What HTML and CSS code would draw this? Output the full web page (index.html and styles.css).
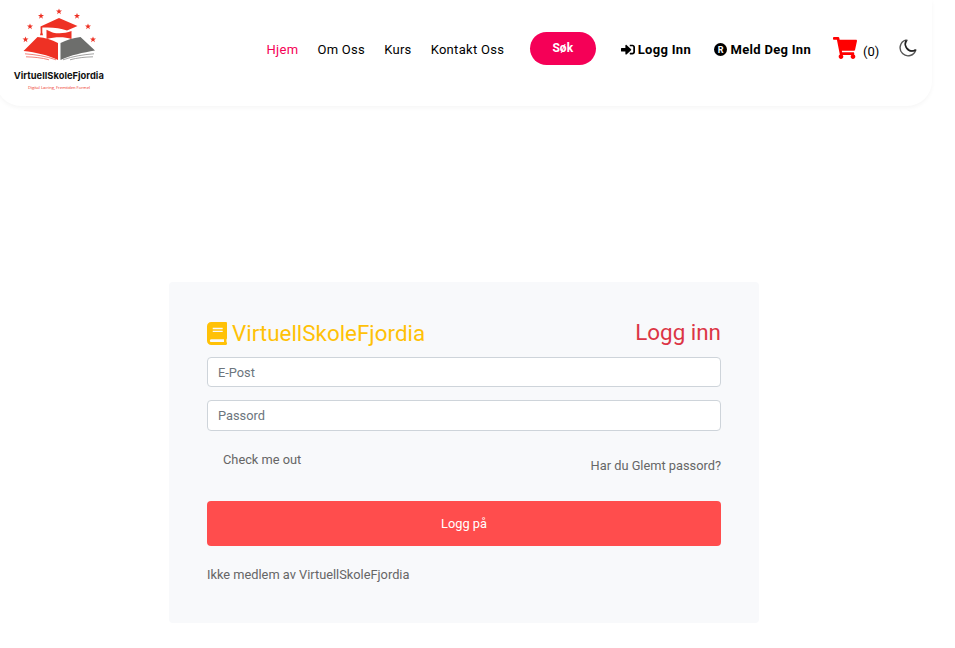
FILE: index.html
```html
<!DOCTYPE html>
<html lang="no">
<head>
<meta charset="utf-8">
<title>VirtuellSkoleFjordia</title>
<link rel="stylesheet" href="styles.css">
</head>
<body>
<header class="header">
  <a class="logo">
    <svg width="112" height="100" viewBox="0 0 112 100">
      <defs><path id="star" d="M0-3.100L.8-.9 3-.9 1.200.5 1.900 2.700 0 1.300-1.900 2.700-1.200.5-3-.9-.8-.9z"/></defs>
      <g fill="#ee3124">
        <use href="#star" x="59" y="11.500"/><use href="#star" x="41" y="16"/><use href="#star" x="77" y="16"/>
        <use href="#star" x="30" y="26.500"/><use href="#star" x="88" y="26.500"/>
        <use href="#star" x="25.500" y="39.500"/><use href="#star" x="93" y="39.500"/>
        <path d="M40.500 26.500L59 18l18.500 8L67 30.500C60 28 52 27 42.300 27.600v5l.7 2.600h-3l.7-2.600z"/>
        <path d="M46.500 29.800c6 3 8 3.500 13 3.500 4 0 8-1 12-2.300v8c-7-2.500-16-2.500-25 0z"/>
        <path d="M37.500 37c8 .8 14 2.500 20.500 6v17c-10-5-22-7.500-34.500-9z"/>
      </g>
      <path d="M60.500 43c6-3 12-5 20-6L95 50.500c-12 2-24 4.500-34.500 9.500z" fill="#6d6e6c"/>
      <g fill="none" stroke-width=".9">
        <path d="M25 53.800c11 .8 21 2.500 31 6M26 56.800c8 .2 16 1 23 3" stroke="#f2766e"/>
        <path d="M94 53.800c-11 .8-21 2.500-31 6M93 56.800c-8 .2-16 1-23 3" stroke="#999"/>
      </g>
      <text class="logo-name" x="13.800" y="78.500" textLength="90">VirtuellSkoleFjordia</text>
      <text class="logo-tag" x="28" y="88.500" textLength="62">Digital Læring, Fremtiden Formel</text>
    </svg>
  </a>
  <nav class="nav">
    <a class="active">Hjem</a><a>Om Oss</a><a>Kurs</a><a>Kontakt Oss</a>
  </nav>
  <button class="search">Søk</button>
  <a class="account login"><svg width="14" height="13" viewBox="0 0 512 512" preserveAspectRatio="none"><path d="M416 448h-84c-6.600 0-12-5.400-12-12v-40c0-6.600 5.400-12 12-12h84c17.700 0 32-14.300 32-32V160c0-17.700-14.300-32-32-32h-84c-6.600 0-12-5.400-12-12V76c0-6.600 5.400-12 12-12h84c53 0 96 43 96 96v192c0 53-43 96-96 96zm-47-201L201 79c-15-15-41-4.500-41 17v96H24c-13.300 0-24 10.700-24 24v96c0 13.300 10.700 24 24 24h136v96c0 21.500 26 32 41 17l168-168c9.300-9.400 9.300-24.600 0-34z"/></svg>Logg Inn</a>
  <a class="account join"><svg width="13" height="13" viewBox="0 0 13 13"><circle cx="6.500" cy="6.500" r="6.500"/><text class="mark" x="6.600" y="9.700" text-anchor="middle">R</text></svg>Meld Deg Inn</a>
  <a class="cart"><svg width="24" height="22" viewBox="0 0 576 512" preserveAspectRatio="none"><path fill="#f00" d="M528.120 301.319l47.273-208C578.806 78.301 567.391 64 551.990 64H159.208l-9.166-44.810C147.758 8.021 137.930 0 126.529 0H24C10.745 0 0 10.745 0 24v16c0 13.255 10.745 24 24 24h69.883l70.248 343.435C147.325 417.100 136 435.222 136 456c0 30.928 25.072 56 56 56s56-25.072 56-56c0-15.674-6.447-29.835-16.824-40h209.647C430.447 426.165 424 440.326 424 456c0 30.928 25.072 56 56 56s56-25.072 56-56c0-22.172-12.888-41.332-31.579-50.405l5.517-24.276c3.413-15.018-8.002-29.319-23.403-29.319H218.117l-6.545-32h293.145c11.206 0 20.920-7.754 23.403-18.681z"/></svg><span>(0)</span></a>
  <a class="moon"><svg width="18" height="18" viewBox="0 0 18 18"><path d="M6.600 1.200A8 8 0 1 0 16.800 11C13 12.800 9.500 11.800 7.600 9 6 6.500 6 3.500 8 1.300z" fill="none" stroke="#555" stroke-width="1.400" stroke-linejoin="round"/><path d="M7.300 1.500C5.800 4 6 6.800 7.600 9c2 2.800 5.400 3.700 9 2" fill="none" stroke="#222" stroke-width="1.500"/></svg></a>
</header>
<main class="panel">
  <div class="titles">
    <h3 class="brand"><svg width="20" height="23" viewBox="0 0 448 512"><path fill="currentColor" d="M448 360V24c0-13.300-10.700-24-24-24H96C43 0 0 43 0 96v320c0 53 43 96 96 96h328c13.300 0 24-10.700 24-24v-16c0-7.500-3.500-14.300-8.900-18.700-4.200-15.400-4.200-59.300 0-74.700 5.400-4.300 8.900-11.100 8.900-18.600zM128 134c0-3.300 2.700-6 6-6h212c3.300 0 6 2.700 6 6v20c0 3.300-2.700 6-6 6H134c-3.300 0-6-2.700-6-6v-20zm0 64c0-3.300 2.700-6 6-6h212c3.300 0 6 2.700 6 6v20c0 3.300-2.700 6-6 6H134c-3.300 0-6-2.700-6-6v-20zm253.400 250H96c-17.700 0-32-14.300-32-32 0-17.600 14.400-32 32-32h285.400c-1.900 17.100-1.900 46.900 0 64z"/></svg>VirtuellSkoleFjordia</h3>
    <h3 class="heading">Logg inn</h3>
  </div>
  <input class="field" type="email" placeholder="E-Post">
  <input class="field password" type="password" placeholder="Passord">
  <div class="options"><label>Check me out</label><a class="forgot">Har du Glemt passord?</a></div>
  <button class="submit">Logg på</button>
  <p class="signup">Ikke medlem av VirtuellSkoleFjordia</p>
</main>
</body>
</html>
```
FILE: styles.css
```css
* { box-sizing: border-box; }
body { margin: 0; background: #fff; font: 12.800px/20px Roboto, sans-serif; color: #666; overflow: hidden; }
.header { display: flex; align-items: flex-start; width: 936px; height: 106px; margin-left: -4px; padding-left: 4px; border-radius: 0 0 25px 25px; box-shadow: 0 2px 4px rgba(0, 0, 0, .04); color: #000; font-size: 13px; white-space: nowrap; }
.logo { width: 112px; flex: none; }
.logo svg, .account svg, .cart svg, .moon svg { display: block; }
.logo-name { font: 700 9.300px Inter, sans-serif; fill: #111; }
.logo-tag { font: 4.200px "Open Sans", sans-serif; fill: #ee3124; }
.nav { display: flex; gap: 19px; margin: 40px 0 0 154.500px; letter-spacing: .3px; }
.active { color: #f50057; }
.search { width: 66px; height: 33px; margin: 32px 0 0 25.500px; padding: 0 0 1px; border: 0; border-radius: 17px; background: #f50057; color: #fff; font: 700 12px Roboto, sans-serif; }
.account { display: flex; align-items: center; gap: 3px; margin-top: 40px; font-weight: 700; letter-spacing: .3px; }
.account svg { margin-top: -1px; }
.login { margin-left: 25px; }
.join { gap: 4px; margin-left: 22.500px; }
.mark { font: 700 9px Roboto, sans-serif; fill: #fff; letter-spacing: 0; }
.cart { display: flex; gap: 6px; margin: 37px 0 0 22px; }
.cart span { margin-top: 5px; }
.moon { margin: 39px 0 0 19.500px; }
.panel { width: 590px; height: 341px; margin: 176px 0 0 169px; padding: 38px; border-radius: 4px; background: #f8f9fb; }
.titles { display: flex; justify-content: space-between; height: 37px; }
h3 { margin: 0; font-size: 22.400px; font-weight: 400; line-height: 27px; }
.brand { display: flex; align-items: center; gap: 5px; height: 27px; color: #ffc107; }
.heading { color: #dc3545; line-height: 25px; }
.field { display: block; width: 100%; height: 30px; padding: 0 10px; border: 1px solid #ced4da; border-radius: 4px; background: #fff; font: 12.800px Roboto, sans-serif; }
.field::placeholder { color: #6c757d; opacity: 1; }
.password { height: 31px; margin-top: 13px; }
.options { display: flex; justify-content: space-between; height: 70px; padding: 19px 0 0 16px; }
.forgot { margin-top: 6px; }
.submit { display: block; width: 100%; height: 45px; padding: 0; border: 0; border-radius: 4px; background: #ff4d4d; color: #fff; font: 12.800px Roboto, sans-serif; }
.signup { margin: 19px 0 0; }
```
